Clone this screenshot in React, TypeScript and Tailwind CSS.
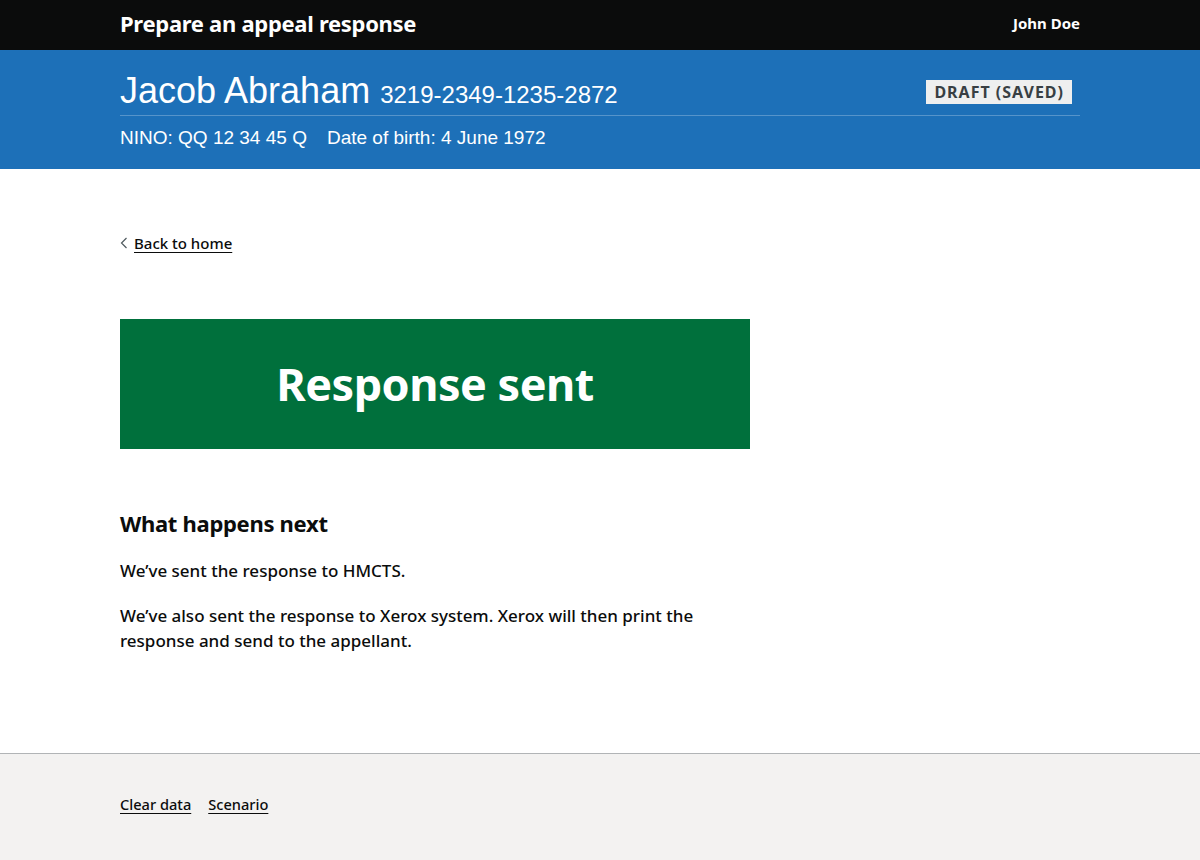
export default function App() {
  const font = { fontFamily: '"Noto Sans", Arial, sans-serif' };
  return (
    <div className="flex min-h-[860px] flex-col bg-white text-[#0b0c0c]" style={font}>
      <header className="h-[50px] bg-[#0b0c0c]">
        <div className="mx-auto flex h-full w-[960px] items-center justify-between pb-[3px]">
          <span className="text-[22px] font-bold tracking-[-0.3px] text-white">Prepare an appeal response</span>
          <span className="text-[15px] font-bold text-white">John Doe</span>
        </div>
      </header>

      <div className="h-[119px] bg-[#1d70b8] text-white" style={{ fontFamily: '"Liberation Sans", Arial, sans-serif' }}>
        <div className="mx-auto w-[960px] pt-[20px]">
          <div className="flex items-end justify-between border-b border-[#5694ca] pb-[2px]">
            <div className="flex items-baseline gap-[10px]">
              <span className="text-[36px] leading-[42px]">Jacob Abraham</span>
              <span className="text-[24px]">3219-2349-1235-2872</span>
            </div>
            <span
              className="mb-[9px] mr-[8px] bg-[#eeefef] px-[8px] py-[2px] text-[16px] font-bold uppercase tracking-[1px] leading-[20px] text-[#383f43]"
              style={font}
            >
              Draft (saved)
            </span>
          </div>
          <div className="mt-[8px] flex gap-[20px] text-[19px]">
            <span>NINO: QQ 12 34 45 Q</span>
            <span>Date of birth: 4 June 1972</span>
          </div>
        </div>
      </div>

      <main className="mx-auto w-[960px] flex-1 pt-[62px] pb-[90px]">
        <a href="#" className="inline-flex items-center gap-[6px] text-[15px] font-medium underline underline-offset-[3px]">
          <svg width="8" height="12" viewBox="0 0 8 12">
            <path d="M6.5 1 L1.5 6 L6.5 11" fill="none" stroke="#505a5f" strokeWidth="1.2" />
          </svg>
          Back to home
        </a>

        <div className="mt-[64px] w-[630px]">
          <div className="flex h-[130px] items-center justify-center bg-[#00703c]">
            <h1 className="text-[45px] font-bold tracking-[-0.5px] text-white">Response sent</h1>
          </div>

          <h2 className="mt-[58px] text-[22px] font-bold tracking-[-0.3px]">What happens next</h2>
          <p className="mt-[18px] text-[17px] font-medium leading-[25px]">We’ve sent the response to HMCTS.</p>
          <p className="mt-[20px] text-[17px] font-medium leading-[25px]">
            We’ve also sent the response to Xerox system. Xerox will then print the response and send to the appellant.
          </p>
        </div>
      </main>

      <footer className="h-[107px] border-t border-[#b1b4b6] bg-[#f3f2f1]">
        <div className="mx-auto flex w-[960px] gap-[17px] pt-[40px] text-[14.6px] font-medium">
          <a href="#" className="underline underline-offset-[3px]">Clear data</a>
          <a href="#" className="underline underline-offset-[3px]">Scenario</a>
        </div>
      </footer>
    </div>
  );
}
